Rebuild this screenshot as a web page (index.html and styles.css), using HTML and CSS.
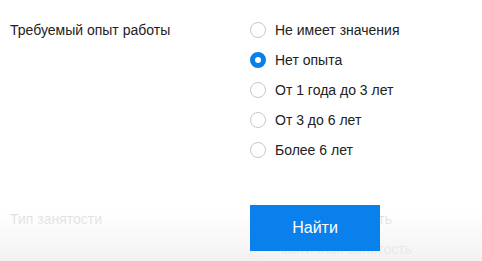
FILE: index.html
```html
<!DOCTYPE html>
<html lang="ru">
<head>
<meta charset="utf-8">
<link rel="stylesheet" href="styles.css">
</head>
<body>
<div class="page">
  <form class="form">
    <div class="field">
      <div class="field-label">Требуемый опыт работы</div>
      <div class="options">
        <label class="option"><span class="radio"></span><span class="option-text">Не имеет значения</span></label>
        <label class="option"><span class="radio radio-checked"></span><span class="option-text">Нет опыта</span></label>
        <label class="option"><span class="radio"></span><span class="option-text">От 1 года до 3 лет</span></label>
        <label class="option"><span class="radio"></span><span class="option-text">От 3 до 6 лет</span></label>
        <label class="option"><span class="radio"></span><span class="option-text">Более 6 лет</span></label>
      </div>
    </div>
    <div class="field field-next">
      <div class="field-label">Тип занятости</div>
      <div class="options">
        <label class="option"><span class="checkbox"></span><span class="option-text">Полная занятость</span></label>
        <label class="option"><span class="checkbox"></span><span class="option-text">Частичная занятость</span></label>
      </div>
    </div>
  </form>
  <div class="footer">
    <button class="submit" type="button">Найти</button>
  </div>
</div>
</body>
</html>
```
FILE: styles.css
```css
html, body {
  margin: 0;
  padding: 0;
  background: #fff;
}
body {
  font-family: "Liberation Sans", Arial, sans-serif;
  color: #222;
  font-size: 14px;
}
.page {
  position: relative;
  width: 482px;
  height: 261px;
  overflow: hidden;
}
.form {
  padding: 15px 0 0 10px;
}
.field {
  display: flex;
}
.field-next {
  margin-top: 39px;
}
.field-label {
  width: 240px;
  line-height: 30px;
}
.options {
  display: flex;
  flex-direction: column;
}
.option {
  display: flex;
  align-items: center;
  height: 30px;
  gap: 9px;
}
.radio {
  box-sizing: border-box;
  width: 16px;
  height: 16px;
  border-radius: 50%;
  border: 1px solid #c8c8c8;
  background: #fff;
}
.radio-checked {
  border: 5px solid #0a7fe8;
  background: #fff;
}
.checkbox {
  box-sizing: border-box;
  width: 16px;
  height: 16px;
  border-radius: 2px;
  border: 1px solid #c8c8c8;
  background: #fff;
}
.option-text {
  line-height: 30px;
}
.footer {
  position: absolute;
  left: 0;
  right: 0;
  bottom: 0;
  height: 91px;
  background: linear-gradient(to bottom,
    rgba(255,255,255,0) 0,
    rgba(255,255,255,0.84) 40px,
    rgba(250,250,250,0.92) 60px,
    rgba(241,241,241,0.95) 100%);
  padding: 35px 0 0 250px;
  box-sizing: border-box;
}
.submit {
  display: block;
  width: 130px;
  height: 46px;
  border: 0;
  border-radius: 0;
  background: #0a80ec;
  color: #fff;
  font-family: "Liberation Sans", Arial, sans-serif;
  font-size: 16px;
  padding: 0;
  cursor: pointer;
}
```
